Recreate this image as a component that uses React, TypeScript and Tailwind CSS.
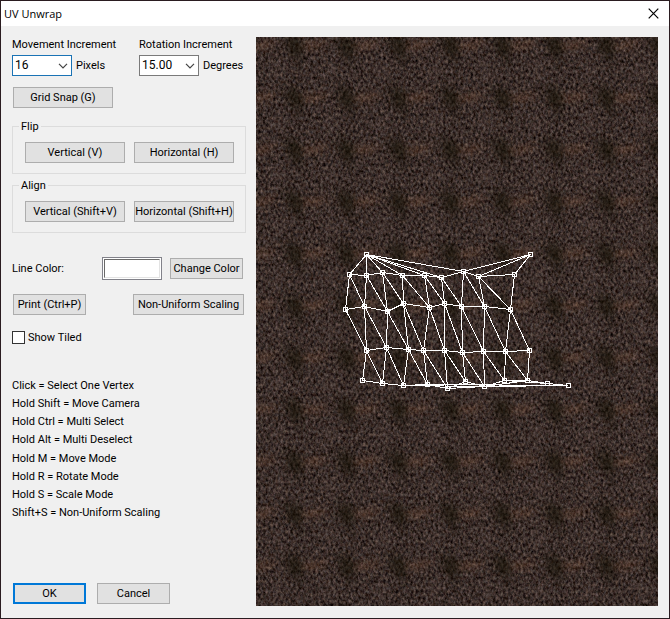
import type { ReactNode } from "react";

type Point = [number, number];

const apex: Point[] = [
  [110, 217],
  [274, 217],
];

const rows: Point[][] = [
  [[93, 237], [110, 238], [126, 235], [146, 238], [168, 238], [185, 240], [207, 234], [222, 239], [258, 237]],
  [[89, 272], [108, 269], [131, 274], [147, 266], [173, 270], [188, 266], [205, 269], [228, 269], [254, 272]],
  [[110, 313], [130, 310], [152, 312], [167, 313], [188, 313], [206, 315], [227, 314], [249, 314], [273, 313]],
  [[106, 343], [126, 346], [147, 348], [171, 347], [191, 351], [209, 344], [228, 349], [248, 343], [271, 343]],
];

const tail: Point[] = [
  [291, 346],
  [312, 348],
];

function buildEdges(): [Point, Point][] {
  const edges: [Point, Point][] = [];
  rows.forEach((row) => {
    for (let i = 0; i < row.length - 1; i++) edges.push([row[i], row[i + 1]]);
  });
  const [top, upper, lower, bottom] = rows;
  for (let i = 0; i < 7; i++) edges.push([apex[0], top[i]]);
  for (let i = 6; i < 9; i++) edges.push([apex[1], top[i]]);
  for (let i = 0; i < 9; i++) {
    edges.push([top[i], upper[i]]);
    edges.push([lower[i], bottom[i]]);
    if (i < 8) {
      edges.push([top[i], upper[i + 1]]);
      edges.push([lower[i], bottom[i + 1]]);
    }
    edges.push([upper[i], lower[i]]);
    if (i > 0) edges.push([upper[i], lower[i - 1]]);
  }
  edges.push([bottom[2], bottom[6]], [bottom[3], tail[1]], [bottom[4], bottom[6]]);
  edges.push([bottom[6], bottom[8]], [bottom[6], tail[1]]);
  edges.push([bottom[7], tail[0]], [bottom[8], tail[0]], [tail[0], tail[1]]);
  return edges;
}

const edges = buildEdges();
const vertices = [...apex, ...rows.flat(), ...tail];

// Each blotch is repeated one tile away on both axes so that its soft edge wraps.
const tileOffsets = [-52, 0, 52];

function Blotch({ cx, cy, rx, ry, fill, opacity }: { cx: number; cy: number; rx: number; ry: number; fill: string; opacity: number }) {
  return (
    <>
      {tileOffsets.flatMap((dx) =>
        tileOffsets.map((dy) => (
          <ellipse key={`${dx},${dy}`} cx={cx + dx} cy={cy + dy} rx={rx} ry={ry} fill={fill} opacity={opacity} />
        )),
      )}
    </>
  );
}

function UvCanvas() {
  return (
    <svg className="block h-full w-full" role="img" aria-label="UV mesh over texture">
      <defs>
        <filter id="grain" x="0" y="0" width="100%" height="100%" colorInterpolationFilters="sRGB">
          <feTurbulence type="fractalNoise" baseFrequency="0.4 0.3" numOctaves="4" seed="21" />
          <feColorMatrix values="0.5 0.16 0 0 -0.105  0.48 0.08 0 0 -0.105  0.46 0.06 0.06 0 -0.13  0 0 0 0 1" />
        </filter>
        <filter id="soften" filterUnits="userSpaceOnUse" x="-60" y="-60" width="172" height="172" colorInterpolationFilters="sRGB">
          <feGaussianBlur stdDeviation="3" />
        </filter>
        <pattern id="blotches" width="52" height="52" patternUnits="userSpaceOnUse">
          <g filter="url(#soften)">
            <Blotch cx={39} cy={10} rx={8} ry={9} fill="#120e02" opacity={0.5} />
            <Blotch cx={34} cy={1} rx={8} ry={6} fill="#120e02" opacity={0.25} />
            <Blotch cx={43} cy={22} rx={4} ry={8} fill="#120e02" opacity={0.3} />
            <Blotch cx={3} cy={9} rx={10} ry={3} fill="#96603f" opacity={0.3} />
            <Blotch cx={14} cy={6} rx={7} ry={3} fill="#96603f" opacity={0.2} />
            <Blotch cx={22} cy={34} rx={6} ry={9} fill="#75655d" opacity={0.14} />
          </g>
        </pattern>
      </defs>
      <rect width="100%" height="100%" filter="url(#grain)" />
      <rect width="100%" height="100%" fill="url(#blotches)" />
      <g stroke="#ffffff" fill="none" shapeRendering="crispEdges" transform="translate(0.5 0.5)">
        {edges.map(([a, b], i) => (
          <line key={i} x1={a[0]} y1={a[1]} x2={b[0]} y2={b[1]} />
        ))}
        {vertices.map(([x, y], i) => (
          <rect key={i} x={x - 2} y={y - 2} width="4" height="4" />
        ))}
      </g>
    </svg>
  );
}

function Button({ children, width, primary = false }: { children: ReactNode; width: string; primary?: boolean }) {
  return (
    <button
      type="button"
      className={`flex h-[21px] shrink-0 items-center justify-center whitespace-nowrap bg-[#e1e1e1] ${width} ${
        primary ? "border-2 border-[#0078d7]" : "border border-[#adadad]"
      }`}
    >
      {children}
    </button>
  );
}

function Combo({ id, label, value, unit, border }: { id: string; label: string; value: string; unit: string; border: string }) {
  return (
    <div className="flex flex-col gap-[3px]">
      <label htmlFor={id}>{label}</label>
      <div className="flex items-center gap-1">
        <div className="relative">
          <select id={id} className={`block h-[21px] w-[60px] appearance-none border bg-white pl-[2px] text-[12px] ${border}`}>
            <option>{value}</option>
          </select>
          <svg className="pointer-events-none absolute right-1 top-2 h-[6px] w-[10px]" viewBox="0 0 10 6" fill="none" stroke="#444444" strokeWidth="1.2">
            <path d="M1 0.8 5 4.8 9 0.8" />
          </svg>
        </div>
        <span>{unit}</span>
      </div>
    </div>
  );
}

function Group({ title, children }: { title: string; children: ReactNode }) {
  return (
    <fieldset className="flex gap-[9px] border border-[#dcdcdc] pb-[10px] pl-3 pt-2">
      <legend className="-ml-[6px] px-[2px]">{title}</legend>
      {children}
    </fieldset>
  );
}

const help = [
  ["Click = Select One Vertex", "Hold Shift = Move Camera", "Hold Ctrl = Multi Select", "Hold Alt = Multi Deselect"],
  ["Hold M = Move Mode", "Hold R = Rotate Mode", "Hold S = Scale Mode", "Shift+S = Non-Uniform Scaling"],
];

export default function App() {
  return (
    <div className="flex min-h-screen flex-col border border-[#2a1c20] bg-[#f0f0f0] font-['Roboto','Liberation_Sans',sans-serif] text-[11px] leading-[15px] text-black">
      <header className="flex h-[25px] items-center justify-between bg-white pl-[3px] pr-[10px]">
        <h1 className="font-['Open_Sans','Noto_Sans',sans-serif] text-[11px]">UV Unwrap</h1>
        <button type="button" aria-label="Close">
          <svg className="h-[11px] w-[11px]" viewBox="0 0 11 11" fill="none" stroke="#000000" strokeWidth="1.2">
            <path d="M0.7 0.7 10.3 10.3M10.3 0.7 0.7 10.3" />
          </svg>
        </button>
      </header>
      <main className="flex grow gap-[10px] pb-3 pl-[11px] pr-[11px] pt-[11px]">
        <form className="flex w-[234px] shrink-0 flex-col whitespace-nowrap">
          <div className="flex">
            <div className="w-[127px] shrink-0">
              <Combo id="movement" label="Movement Increment" value="16" unit="Pixels" border="border-[#1a73b5]" />
            </div>
            <Combo id="rotation" label="Rotation Increment" value="15.00" unit="Degrees" border="border-[#7a7a7a]" />
          </div>
          <div className="mb-[11px] mt-[11px] flex pl-px">
            <Button width="w-[100px]">Grid Snap (G)</Button>
          </div>
          <div className="flex flex-col gap-1">
            <Group title="Flip">
              <Button width="w-[100px]">Vertical (V)</Button>
              <Button width="w-[100px]">Horizontal (H)</Button>
            </Group>
            <Group title="Align">
              <Button width="w-[100px]">Vertical (Shift+V)</Button>
              <Button width="w-[100px]">Horizontal (Shift+H)</Button>
            </Group>
          </div>
          <div className="mt-6 flex items-center">
            <span className="w-[90px]">Line Color:</span>
            <div className="h-[23px] w-[60px] border border-[#82828a] bg-white p-px">
              <div className="h-full border border-b-[#e3e3e3] border-l-[#696969] border-r-[#e3e3e3] border-t-[#696969]" />
            </div>
            <div className="ml-2 flex">
              <Button width="w-[73px]">Change Color</Button>
            </div>
          </div>
          <div className="mt-[14px] flex justify-between pl-px pr-[2px]">
            <Button width="w-[73px]">Print (Ctrl+P)</Button>
            <Button width="w-[111px]">Non-Uniform Scaling</Button>
          </div>
          <label className="mt-[15px] flex items-center gap-[3px]">
            <input type="checkbox" className="h-[13px] w-[13px] appearance-none border border-[#333333] bg-white checked:bg-[#333333]" />
            Show Tiled
          </label>
          <div className="mt-8 flex flex-col gap-px leading-[18px]">
            {help.map((lines) => (
              <ul key={lines[0]}>
                {lines.map((line) => (
                  <li key={line}>{line}</li>
                ))}
              </ul>
            ))}
          </div>
          <div className="mt-auto flex gap-[11px] pb-[2px] pl-px">
            <Button width="w-[73px]" primary>OK</Button>
            <Button width="w-[73px]">Cancel</Button>
          </div>
        </form>
        <section className="flex min-w-0 grow bg-[#3a2e2b]">
          <UvCanvas />
        </section>
      </main>
    </div>
  );
}
